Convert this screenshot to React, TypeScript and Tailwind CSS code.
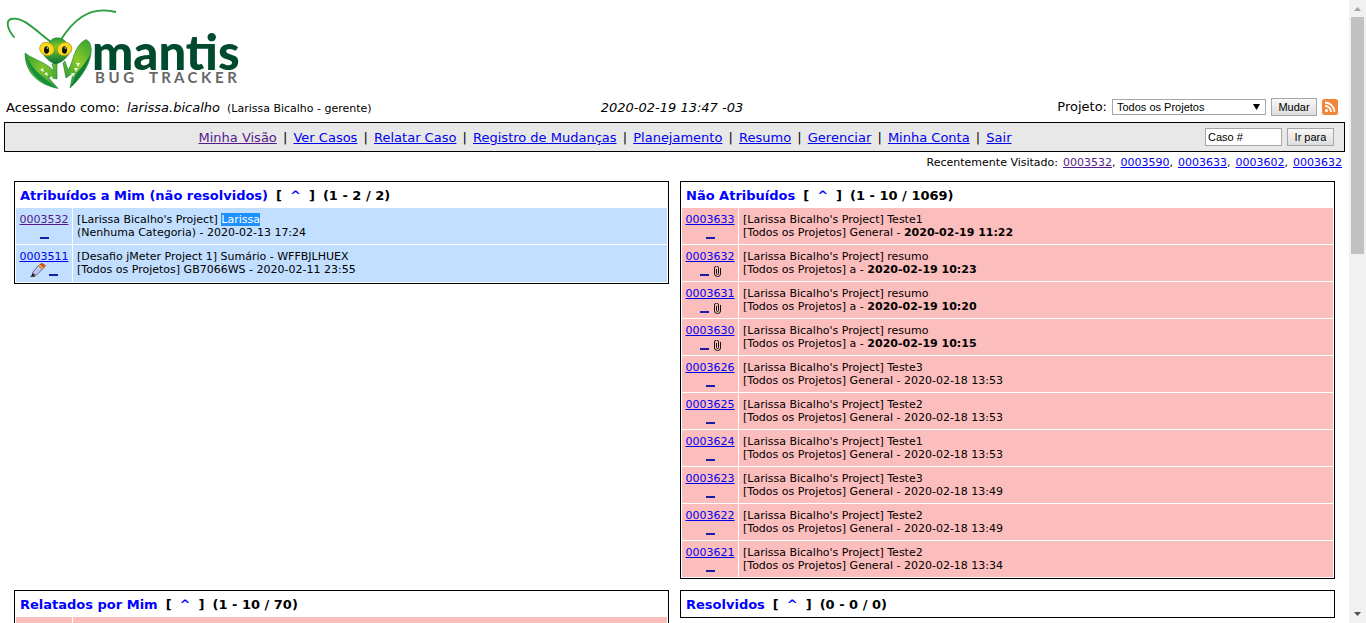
import type { ReactNode } from 'react';

const LINK = 'text-[#0000ee] underline';
const VISITED = 'text-[#551a8b] underline';

function Logo() {
  return (
    <svg viewBox="0 0 242 92" className="block h-[92px] w-[242px]" role="img" aria-label="Mantis Bug Tracker">
      <defs>
        <linearGradient id="leafL" x1="0" y1="0" x2="1" y2="0.8">
          <stop offset="0" stopColor="#2f9e33" />
          <stop offset="0.5" stopColor="#7cc52a" />
          <stop offset="1" stopColor="#3fa535" />
        </linearGradient>
        <linearGradient id="leafR" x1="0.9" y1="0" x2="0.3" y2="1">
          <stop offset="0" stopColor="#3aa233" />
          <stop offset="0.5" stopColor="#8ccb28" />
          <stop offset="1" stopColor="#249637" />
        </linearGradient>
        <linearGradient id="head" x1="0" y1="0" x2="0" y2="1">
          <stop offset="0" stopColor="#2a9a34" />
          <stop offset="0.35" stopColor="#86c92a" />
          <stop offset="0.55" stopColor="#4fae30" />
          <stop offset="1" stopColor="#0b6a3a" />
        </linearGradient>
      </defs>
      <path d="M14 37 C8 30 5 21 11 19 C22 16 34 29 51 42" fill="none" stroke="#2a9d3c" strokeWidth="1.900" strokeLinecap="round" />
      <path d="M60 41 C72 22 88 5 116 12" fill="none" stroke="#2a9d3c" strokeWidth="1.900" />
      <path d="M25 53 C32 59 46 62 54 71 L52 64 L57 61 L57 79 L48 77 L58 88.500 C37 84 25 72 25 53 Z" fill="url(#leafL)" stroke="#16803a" strokeWidth="0.600" />
      <path d="M26 54 C29 66 40 75 57 88 C38 84 27 71 26 54 Z" fill="#16913a" />
      <path d="M86 39.500 C95 43 94 66 70 88 L73 73 L66 78 L63 63 L65 61 L68 70 C74 62 73 46 86 39.500 Z" fill="url(#leafR)" stroke="#16803a" strokeWidth="0.600" />
      <path d="M91 53 C89 64 83 75 71 87 L76 74 C82 67 87 61 91 53 Z" fill="#0f7f3a" />
      <path d="M40 70 l3 -2 l1 4 z M44 74 l3 -2 l1 4 z M49 78 l3 -2 l1 4 z M75 73 l-4 0 l2 4 z M78 68 l-4 0 l2 4 z M80 63 l-4 0 l2 4 z" fill="#f2fae9" />
      <path d="M50 42 C52 37 61 36 66 42 L69 54 C65 60 60 63 56 64 C52 63 47 60 43 54 Z" fill="url(#head)" stroke="#16803a" strokeWidth="0.600" />
      <ellipse cx="47" cy="49" rx="7.400" ry="6.600" transform="rotate(22 47 49)" fill="#f8dc1a" stroke="#a58b12" strokeWidth="0.700" />
      <ellipse cx="64.500" cy="49" rx="7.400" ry="6.600" transform="rotate(-22 64.500 49)" fill="#f8dc1a" stroke="#a58b12" strokeWidth="0.700" />
      <ellipse cx="46.500" cy="50" rx="2.500" ry="3.800" fill="#111" />
      <ellipse cx="64.500" cy="50" rx="2.500" ry="3.800" fill="#111" />
      <circle cx="47.300" cy="48" r="0.800" fill="#fff" />
      <circle cx="65.300" cy="48" r="0.800" fill="#fff" />
      <text x="92" y="70" fontFamily="Lato, sans-serif" fontWeight="900" fontSize="49" fill="#004b2d">mantis</text>
      <text x="95" y="83" fontFamily="Lato, sans-serif" fontWeight="700" fontSize="15" fill="#666">B U G</text>
      <text x="149" y="83" fontFamily="Lato, sans-serif" fontWeight="700" fontSize="15" fill="#666">T R A C K E R</text>
    </svg>
  );
}

function Rss() {
  return (
    <svg viewBox="0 0 16 16" className="size-4" aria-hidden="true">
      <rect width="16" height="16" rx="2.500" fill="#f08638" />
      <circle cx="4.500" cy="11.500" r="1.500" fill="#fff" />
      <path d="M3 7 a6 6 0 0 1 6 6 M3 3.500 a9.500 9.500 0 0 1 9.500 9.500" fill="none" stroke="#fff" strokeWidth="1.800" />
    </svg>
  );
}

function Pencil() {
  return (
    <svg viewBox="0 0 16 14" className="h-[14px] w-4" aria-hidden="true">
      <path d="M0.500 13.500 H5" stroke="#222" strokeWidth="0.800" />
      <path d="M1 13.500 L2.500 10 L5.500 12.500 Z" fill="#2b1d10" />
      <path d="M2.500 9.500 L8.500 2.500 L12.500 6 L6 12.500 Z" fill="#c4c4ec" stroke="#4a4a72" strokeWidth="0.800" />
      <path d="M8.500 2.500 L10 1.200 L14 4.500 L12.500 6 Z" fill="#ffc21f" stroke="#8a5a10" strokeWidth="0.500" />
      <path d="M10 1.200 L12 0.300 L15.500 2.500 L14 4.500 Z" fill="#ee4a2c" stroke="#8c2414" strokeWidth="0.500" />
    </svg>
  );
}

function Clip() {
  return (
    <svg viewBox="0 0 7 11" className="h-[11px] w-[7px]" aria-hidden="true">
      <path d="M2.500 3 V7.500 a1 1 0 0 0 2 0 V2 a1.500 1.500 0 0 0 -4 0 V8 a3 2.500 0 0 0 6 0 V2" fill="none" stroke="#111" strokeWidth="1" />
    </svg>
  );
}

type Bug = { id: string; visited?: boolean; project: string; summary: string; picked?: boolean; category: string; date: string; recent?: boolean; icon?: 'pencil' | 'clip' };

const P = "[Larissa Bicalho's Project] ";
const G = '[Todos os Projetos] General';

const mine: Bug[] = [
  { id: '0003532', visited: true, project: P, summary: 'Larissa', picked: true, category: '(Nenhuma Categoria)', date: '2020-02-13 17:24' },
  { id: '0003511', project: '[Desafio jMeter Project 1] ', summary: 'Sumário - WFFBJLHUEX', category: '[Todos os Projetos] GB7066WS', date: '2020-02-11 23:55', icon: 'pencil' },
];

const unassigned: Bug[] = [
  { id: '0003633', project: P, summary: 'Teste1', category: G, date: '2020-02-19 11:22', recent: true },
  { id: '0003632', project: P, summary: 'resumo', category: '[Todos os Projetos] a', date: '2020-02-19 10:23', recent: true, icon: 'clip' },
  { id: '0003631', project: P, summary: 'resumo', category: '[Todos os Projetos] a', date: '2020-02-19 10:20', recent: true, icon: 'clip' },
  { id: '0003630', project: P, summary: 'resumo', category: '[Todos os Projetos] a', date: '2020-02-19 10:15', recent: true, icon: 'clip' },
  { id: '0003626', project: P, summary: 'Teste3', category: G, date: '2020-02-18 13:53' },
  { id: '0003625', project: P, summary: 'Teste2', category: G, date: '2020-02-18 13:53' },
  { id: '0003624', project: P, summary: 'Teste1', category: G, date: '2020-02-18 13:53' },
  { id: '0003623', project: P, summary: 'Teste3', category: G, date: '2020-02-18 13:49' },
  { id: '0003622', project: P, summary: 'Teste2', category: G, date: '2020-02-18 13:49' },
  { id: '0003621', project: P, summary: 'Teste2', category: G, date: '2020-02-18 13:34' },
];

function Panel({ title, range, children }: { title: string; range: string; children?: ReactNode }) {
  return (
    <table className="w-full table-fixed border-separate border-spacing-px self-start border border-black">
      <colgroup>
        <col className="w-14" />
        <col />
      </colgroup>
      <thead>
        <tr>
          <th colSpan={2} className="h-6 px-1 pt-[2px] pb-0 text-left text-[13px] leading-4 font-bold">
            <div className="flex gap-2">
              <a href="#lista" className="text-[#0000ff]">{title}</a>
              <span className="flex gap-2">
                <span>[</span>
                <a href="#janela" className="text-[#0000ff]">^</a>
                <span>]</span>
              </span>
              <span>{range}</span>
            </div>
          </th>
        </tr>
      </thead>
      <tbody>{children}</tbody>
    </table>
  );
}

function Row({ bug, tone }: { bug: Bug; tone: string }) {
  return (
    <tr className={tone}>
      <td className={`${bug.icon === 'pencil' ? 'h-[37px]' : 'h-9'} p-0 pt-[5px] text-center align-top text-[11px] leading-[13px]`}>
        <a href="#caso" className={bug.visited ? VISITED : LINK}>{bug.id}</a>
        <div className={`flex h-[14px] items-end justify-center ${bug.icon === 'pencil' ? 'gap-[3px]' : 'gap-[5px]'}`}>
          {bug.icon === 'pencil' && <Pencil />}
          <span className="mb-px h-[2px] w-[9px] bg-[#1c1ca8]" />
          {bug.icon === 'clip' && <Clip />}
        </div>
      </td>
      <td className="px-1 pt-[5px] pb-0 align-top text-[11px] leading-[13px]">
        {bug.project}
        <span className={bug.picked ? 'bg-[#1e90ff] text-white' : ''}>{bug.summary}</span>
        <br />
        {bug.category} - <span className={bug.recent ? 'font-bold' : ''}>{bug.date}</span>
      </td>
    </tr>
  );
}

const menu = ['Minha Visão', 'Ver Casos', 'Relatar Caso', 'Registro de Mudanças', 'Planejamento', 'Resumo', 'Gerenciar', 'Minha Conta', 'Sair'];
const recent = ['0003532', '0003590', '0003633', '0003602', '0003632'];
const BUTTON = 'h-[18px] border border-[#a6a6a6] bg-linear-to-b from-[#f8f8f8] to-[#dddddd] text-center font-["Liberation_Sans",sans-serif] text-[11px] leading-4 text-black';

export default function App() {
  return (
    <div className='flex h-screen overflow-hidden bg-white font-["DejaVu_Sans",Verdana,sans-serif] text-black'>
      <div className="min-w-0 flex-1">
        <header className="h-24">
          <Logo />
        </header>

        <div className="grid h-[26px] grid-cols-3 items-center pr-[11px] pb-1 pl-[6px] text-[13px] leading-4">
          <div className="flex items-baseline gap-[7px] pt-[2px] whitespace-nowrap">
            <span>Acessando como:</span>
            <i>larissa.bicalho</i>
            <span className="text-[11px]">(Larissa Bicalho - gerente)</span>
          </div>
          <div className="pt-[2px] text-center italic">2020-02-19 13:47 -03</div>
          <form className="flex items-center justify-end gap-[5px]">
            <label htmlFor="projeto">Projeto:</label>
            <div className="relative flex">
              <select id="projeto" className='h-4 w-[154px] appearance-none border border-[#a6a6a6] bg-white pl-1 font-["Liberation_Sans",sans-serif] text-[11px] leading-[14px]'>
                <option>Todos os Projetos</option>
              </select>
              <svg viewBox="0 0 7 6" className="pointer-events-none absolute top-[5px] right-[6px] h-[6px] w-[7px]" aria-hidden="true">
                <path d="M0 0 H7 L3.500 6 Z" fill="#000" />
              </svg>
            </div>
            <button type="button" className={`${BUTTON} w-[46px]`}>Mudar</button>
            <a href="#rss" aria-label="RSS"><Rss /></a>
          </form>
        </div>

        <nav className="mx-1 flex h-[30px] items-center border border-black bg-[#e8e8e8] pr-[10px] text-[13px] leading-4">
          <div className="flex-1 pt-[2px] text-center whitespace-nowrap">
            {menu.map((item, i) => (
              <span key={item}>
                {i > 0 && <span className="mx-[2px]"> | </span>}
                <a href="#menu" className={i === 0 ? VISITED : LINK}>{item}</a>
              </span>
            ))}
          </div>
          <form className="flex gap-[5px]">
            <input aria-label="Caso" defaultValue="Caso #" className='h-[18px] w-[77px] border border-[#a6a6a6] bg-white px-[2px] font-["Liberation_Sans",sans-serif] text-[11px]' />
            <button type="button" className={`${BUTTON} w-[47px]`}>Ir para</button>
          </form>
        </nav>

        <div className="flex h-[29px] justify-end gap-[5px] pt-1 pr-[7px] text-[11px] leading-[14px]">
          <span>Recentemente Visitado:</span>
          {recent.map((id, i) => (
            <span key={id}>
              <a href="#caso" className={i === 0 ? VISITED : LINK}>{id}</a>
              {i < recent.length - 1 && ','}
            </span>
          ))}
        </div>

        <main className="grid grid-cols-2 gap-[11px] px-[14px]">
          <Panel title="Atribuídos a Mim (não resolvidos)" range="(1 - 2 / 2)">
            {mine.map((b) => <Row key={b.id} bug={b} tone="bg-[#c2dfff]" />)}
          </Panel>
          <Panel title="Não Atribuídos" range="(1 - 10 / 1069)">
            {unassigned.map((b) => <Row key={b.id} bug={b} tone="bg-[#fcbdbd]" />)}
          </Panel>
          <Panel title="Relatados por Mim" range="(1 - 10 / 70)">
            <tr className="bg-[#fcbdbd]">
              <td className="h-9" />
              <td />
            </tr>
          </Panel>
          <Panel title="Resolvidos" range="(0 - 0 / 0)" />
        </main>
      </div>

      <div className="flex w-[17px] shrink-0 flex-col items-center bg-[#f1f1f1]" aria-hidden="true">
        <svg viewBox="0 0 17 17" className="size-[17px] shrink-0"><path d="M5 11 L8.500 7 L12 11 Z" fill="#a3a3a3" /></svg>
        <div className="w-[13px] basis-[237px] bg-[#c1c1c1]" />
        <svg viewBox="0 0 17 17" className="mt-auto size-[17px] shrink-0"><path d="M5 6 L8.500 10 L12 6 Z" fill="#505050" /></svg>
      </div>
    </div>
  );
}
